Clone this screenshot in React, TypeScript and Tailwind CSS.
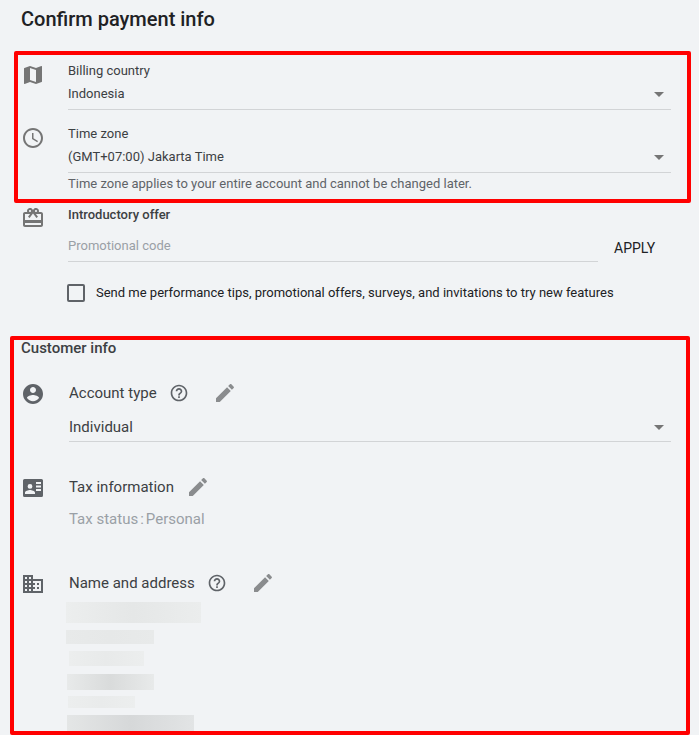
import React from "react";

const paths = {
  map: "M20.5 3l-.16.03L15 5.1 9 3 3.36 4.9c-.21.07-.36.25-.36.48V20.5c0 .28.22.5.5.5l.16-.03L9 18.9l6 2.1 5.64-1.9c.21-.07.36-.25.36-.48V3.5c0-.28-.22-.5-.5-.5zM15 19l-6-2.11V5l6 2.11V19z",
  clock: "M11.99 2C6.47 2 2 6.48 2 12s4.47 10 9.99 10C17.52 22 22 17.52 22 12S17.52 2 11.99 2zM12 20c-4.42 0-8-3.58-8-8s3.58-8 8-8 8 3.58 8 8-3.58 8-8 8zm.5-13H11v6l5.25 3.15.75-1.23-4.5-2.67z",
  gift: "M20 6h-2.18c.11-.31.18-.65.18-1 0-1.66-1.34-3-3-3-1.05 0-1.96.54-2.5 1.35l-.5.67-.5-.68C10.96 2.54 10.05 2 9 2 7.34 2 6 3.34 6 5c0 .35.07.69.18 1H4c-1.11 0-1.99.89-1.99 2L2 19c0 1.11.89 2 2 2h16c1.11 0 2-.89 2-2V8c0-1.11-.89-2-2-2zm-5-2c.55 0 1 .45 1 1s-.45 1-1 1-1-.45-1-1 .45-1 1-1zM9 4c.55 0 1 .45 1 1s-.45 1-1 1-1-.45-1-1 .45-1 1-1zm11 15H4v-2h16v2zm0-5H4V8h5.08L7 10.83 8.62 12 11 8.76l1-1.36 1 1.36L15.38 12 17 10.83 14.92 8H20v6z",
  account: "M12 2C6.48 2 2 6.48 2 12s4.48 10 10 10 10-4.48 10-10S17.52 2 12 2zm0 3c1.66 0 3 1.34 3 3s-1.34 3-3 3-3-1.34-3-3 1.34-3 3-3zm0 14.2c-2.5 0-4.71-1.28-6-3.22.03-1.99 4-3.08 6-3.08 1.99 0 5.97 1.09 6 3.08-1.29 1.94-3.5 3.22-6 3.22z",
  help: "M11 18h2v-2h-2v2zm1-16C6.48 2 2 6.48 2 12s4.48 10 10 10 10-4.48 10-10S17.52 2 12 2zm0 18c-4.41 0-8-3.59-8-8s3.59-8 8-8 8 3.59 8 8-3.59 8-8 8zm0-14c-2.21 0-4 1.79-4 4h2c0-1.1.9-2 2-2s2 .9 2 2c0 2-3 1.75-3 5h2c0-2.25 3-2.5 3-5 0-2.21-1.79-4-4-4z",
  edit: "M3 17.25V21h3.75L17.81 9.94l-3.75-3.75L3 17.25zM20.71 7.04c.39-.39.39-1.02 0-1.41l-2.34-2.34c-.39-.39-1.02-.39-1.41 0l-1.83 1.83 3.75 3.75 1.83-1.83z",
  card: "M3.5 3h17A1.5 1.5 0 0 1 22 4.5v15a1.5 1.5 0 0 1-1.5 1.5h-17A1.5 1.5 0 0 1 2 19.5v-15A1.5 1.5 0 0 1 3.5 3zM9 8a2.4 2.4 0 1 0 0 4.8A2.4 2.4 0 0 0 9 8zM4 18h10v-1.3c0-1.7-3.3-2.6-5-2.6s-5 .9-5 2.6V18zM15 6v2h5V6h-5zm0 3.5v2h5v-2h-5zm0 3.5v2h5v-2h-5z",
  domain: "M12 7V3H2v18h20V7H10zM6 19H4v-2h2v2zm0-4H4v-2h2v2zm0-4H4V9h2v2zm0-4H4V5h2v2zm4 12H8v-2h2v2zm0-4H8v-2h2v2zm0-4H8V9h2v2zm0-4H8V5h2v2zm10 12h-8v-2h2v-2h-2v-2h2v-2h-2V9h8v10zm-2-8h-2v2h2v-2zm0 4h-2v2h2v-2z",
};

const Icon = ({ d, className }: { d: string; className: string }) => (
  <svg viewBox="0 0 24 24" className={className} fill="currentColor" fillRule="evenodd">
    <path d={d} />
  </svg>
);

const Arrow = () => (
  <div className="mr-[7px] h-0 w-0 border-x-[5px] border-t-[5px] border-x-transparent border-t-[#757575]" />
);

const Select = ({ value }: { value: string }) => (
  <div className="mt-[5px] flex items-center justify-between border-b border-[#d2d4d6] pb-[6px] text-[13px] leading-[18px] text-[#3c4043]">
    <span>{value}</span>
    <Arrow />
  </div>
);

const Blur = ({ className }: { className: string }) => (
  <div className={`bg-linear-to-r ${className}`} />
);

export default function App() {
  return (
    <div className="relative h-[735px] w-[699px] overflow-hidden bg-[#f1f3f5] font-['Roboto',sans-serif] text-[#202124]">
      <h1 className="pl-[21px] pt-[8px] text-[20px] font-medium leading-[22px]">Confirm payment info</h1>

      {/* Billing */}
      <div className="mt-[32px] flex pl-[21px] pr-[28px]">
        <Icon d={paths.map} className="mt-[1px] h-6 w-6 text-[#757575]" />
        <div className="ml-[23px] flex-1">
          <div className="text-[13px] leading-[18px] text-[#3c4043]">Billing country</div>
          <Select value="Indonesia" />
        </div>
      </div>

      {/* Time zone */}
      <div className="mt-[15px] flex pl-[21px] pr-[28px]">
        <Icon d={paths.clock} className="mt-[1px] h-6 w-6 text-[#757575]" />
        <div className="ml-[23px] flex-1">
          <div className="text-[13px] leading-[18px] text-[#3c4043]">Time zone</div>
          <Select value="(GMT+07:00) Jakarta Time" />
          <div className="mt-[2px] text-[13px] leading-[18px] text-[#5f6368]">
            Time zone applies to your entire account and cannot be changed later.
          </div>
        </div>
      </div>

      {/* Offer */}
      <div className="mt-[13px] flex pl-[21px]">
        <Icon d={paths.gift} className="h-6 w-6 text-[#757575]" />
        <div className="ml-[23px] flex-1">
          <div className="text-[13px] font-medium leading-[18px] text-[#3c4043]">Introductory offer</div>
          <div className="mt-[13px] flex items-end">
            <div className="w-[530px] border-b border-[#d2d4d6] pb-[6px] text-[13px] leading-[18px] text-[#9aa0a6]">
              Promotional code
            </div>
            <button className="ml-[16px] pb-[5px] text-[14px] leading-[18px] text-[#202124]">APPLY</button>
          </div>
        </div>
      </div>

      <label className="ml-[67px] mt-[22px] flex items-center">
        <span className="h-[18px] w-[18px] rounded-[2px] border-2 border-[#5f6368]" />
        <span className="ml-[11px] text-[13px] leading-[18px] text-[#202124]">
          Send me performance tips, promotional offers, surveys, and invitations to try new features
        </span>
      </label>

      {/* Customer info */}
      <h2 className="mt-[37px] pl-[21px] text-[15px] font-medium leading-[18px] text-[#3c4043]">Customer info</h2>

      <div className="mt-[25px] flex pl-[21px] pr-[28px]">
        <Icon d={paths.account} className="h-6 w-6 text-[#5f6368]" />
        <div className="ml-[24px] flex-1">
          <div className="flex h-[24px] items-center pb-[2px] text-[15px] text-[#3c4043]">
            <span>Account type</span>
            <Icon d={paths.help} className="ml-[12px] h-5 w-5 text-[#5f6368]" />
            <Icon d={paths.edit} className="ml-[24px] h-6 w-6 text-[#8a8c8e]" />
          </div>
          <div className="mt-[11px] flex items-center justify-between border-b border-[#d2d4d6] pb-[4px] text-[15px] leading-[20px] text-[#3c4043]">
            <span>Individual</span>
            <Arrow />
          </div>
        </div>
      </div>

      <div className="mt-[34px] flex pl-[21px]">
        <Icon d={paths.card} className="h-6 w-6 text-[#5f6368]" />
        <div className="ml-[24px]">
          <div className="flex h-[24px] items-center pb-[2px] text-[15px] text-[#3c4043]">
            <span>Tax information</span>
            <Icon d={paths.edit} className="ml-[12px] h-6 w-6 text-[#8a8c8e]" />
          </div>
          <div className="mt-[9px] flex text-[15px] leading-[20px] text-[#9aa0a6]">
            <span>Tax status</span>
            <span className="mx-[2px]">:</span>
            <span>Personal</span>
          </div>
        </div>
      </div>

      <div className="mt-[43px] flex pl-[21px]">
        <Icon d={paths.domain} className="h-6 w-6 text-[#5f6368]" />
        <div className="ml-[24px]">
          <div className="flex h-[24px] items-center pb-[2px] text-[15px] text-[#3c4043]">
            <span>Name and address</span>
            <Icon d={paths.help} className="ml-[12px] h-5 w-5 text-[#5f6368]" />
            <Icon d={paths.edit} className="ml-[24px] h-6 w-6 text-[#8a8c8e]" />
          </div>
          <div className="-ml-[3px] mt-[6px] flex flex-col">
            <Blur className="h-[21px] w-[135px] from-[#eceeee] via-[#e5e7e7] to-[#ebeded]" />
            <Blur className="mt-[7px] h-[14px] w-[88px] from-[#e8eaea] via-[#e6e8e8] to-[#e8eaea]" />
            <Blur className="ml-[3px] mt-[7px] h-[15px] w-[75px] from-[#eceeee] via-[#e8eaea] to-[#eceeee]" />
            <Blur className="ml-[1px] mt-[8px] h-[16px] w-[87px] from-[#e8eaea] via-[#d9dbdb] to-[#e8eaea]" />
            <Blur className="ml-[2px] mt-[6px] h-[12px] w-[67px] from-[#eceeee] via-[#e9ebeb] to-[#eceeee]" />
            <Blur className="ml-[1px] mt-[7px] h-[19px] w-[127px] from-[#e4e6e6] via-[#d6d8d9] to-[#e2e4e5]" />
          </div>
        </div>
      </div>

      {/* red highlight boxes drawn over the page */}
      <div className="absolute left-[14px] top-[51px] h-[152px] w-[677px] rounded-[2px] border-4 border-[#ff0000]" />
      <div className="absolute left-[10px] top-[336px] h-[399px] w-[680px] rounded-[2px] border-4 border-[#ff0000]" />
    </div>
  );
}
